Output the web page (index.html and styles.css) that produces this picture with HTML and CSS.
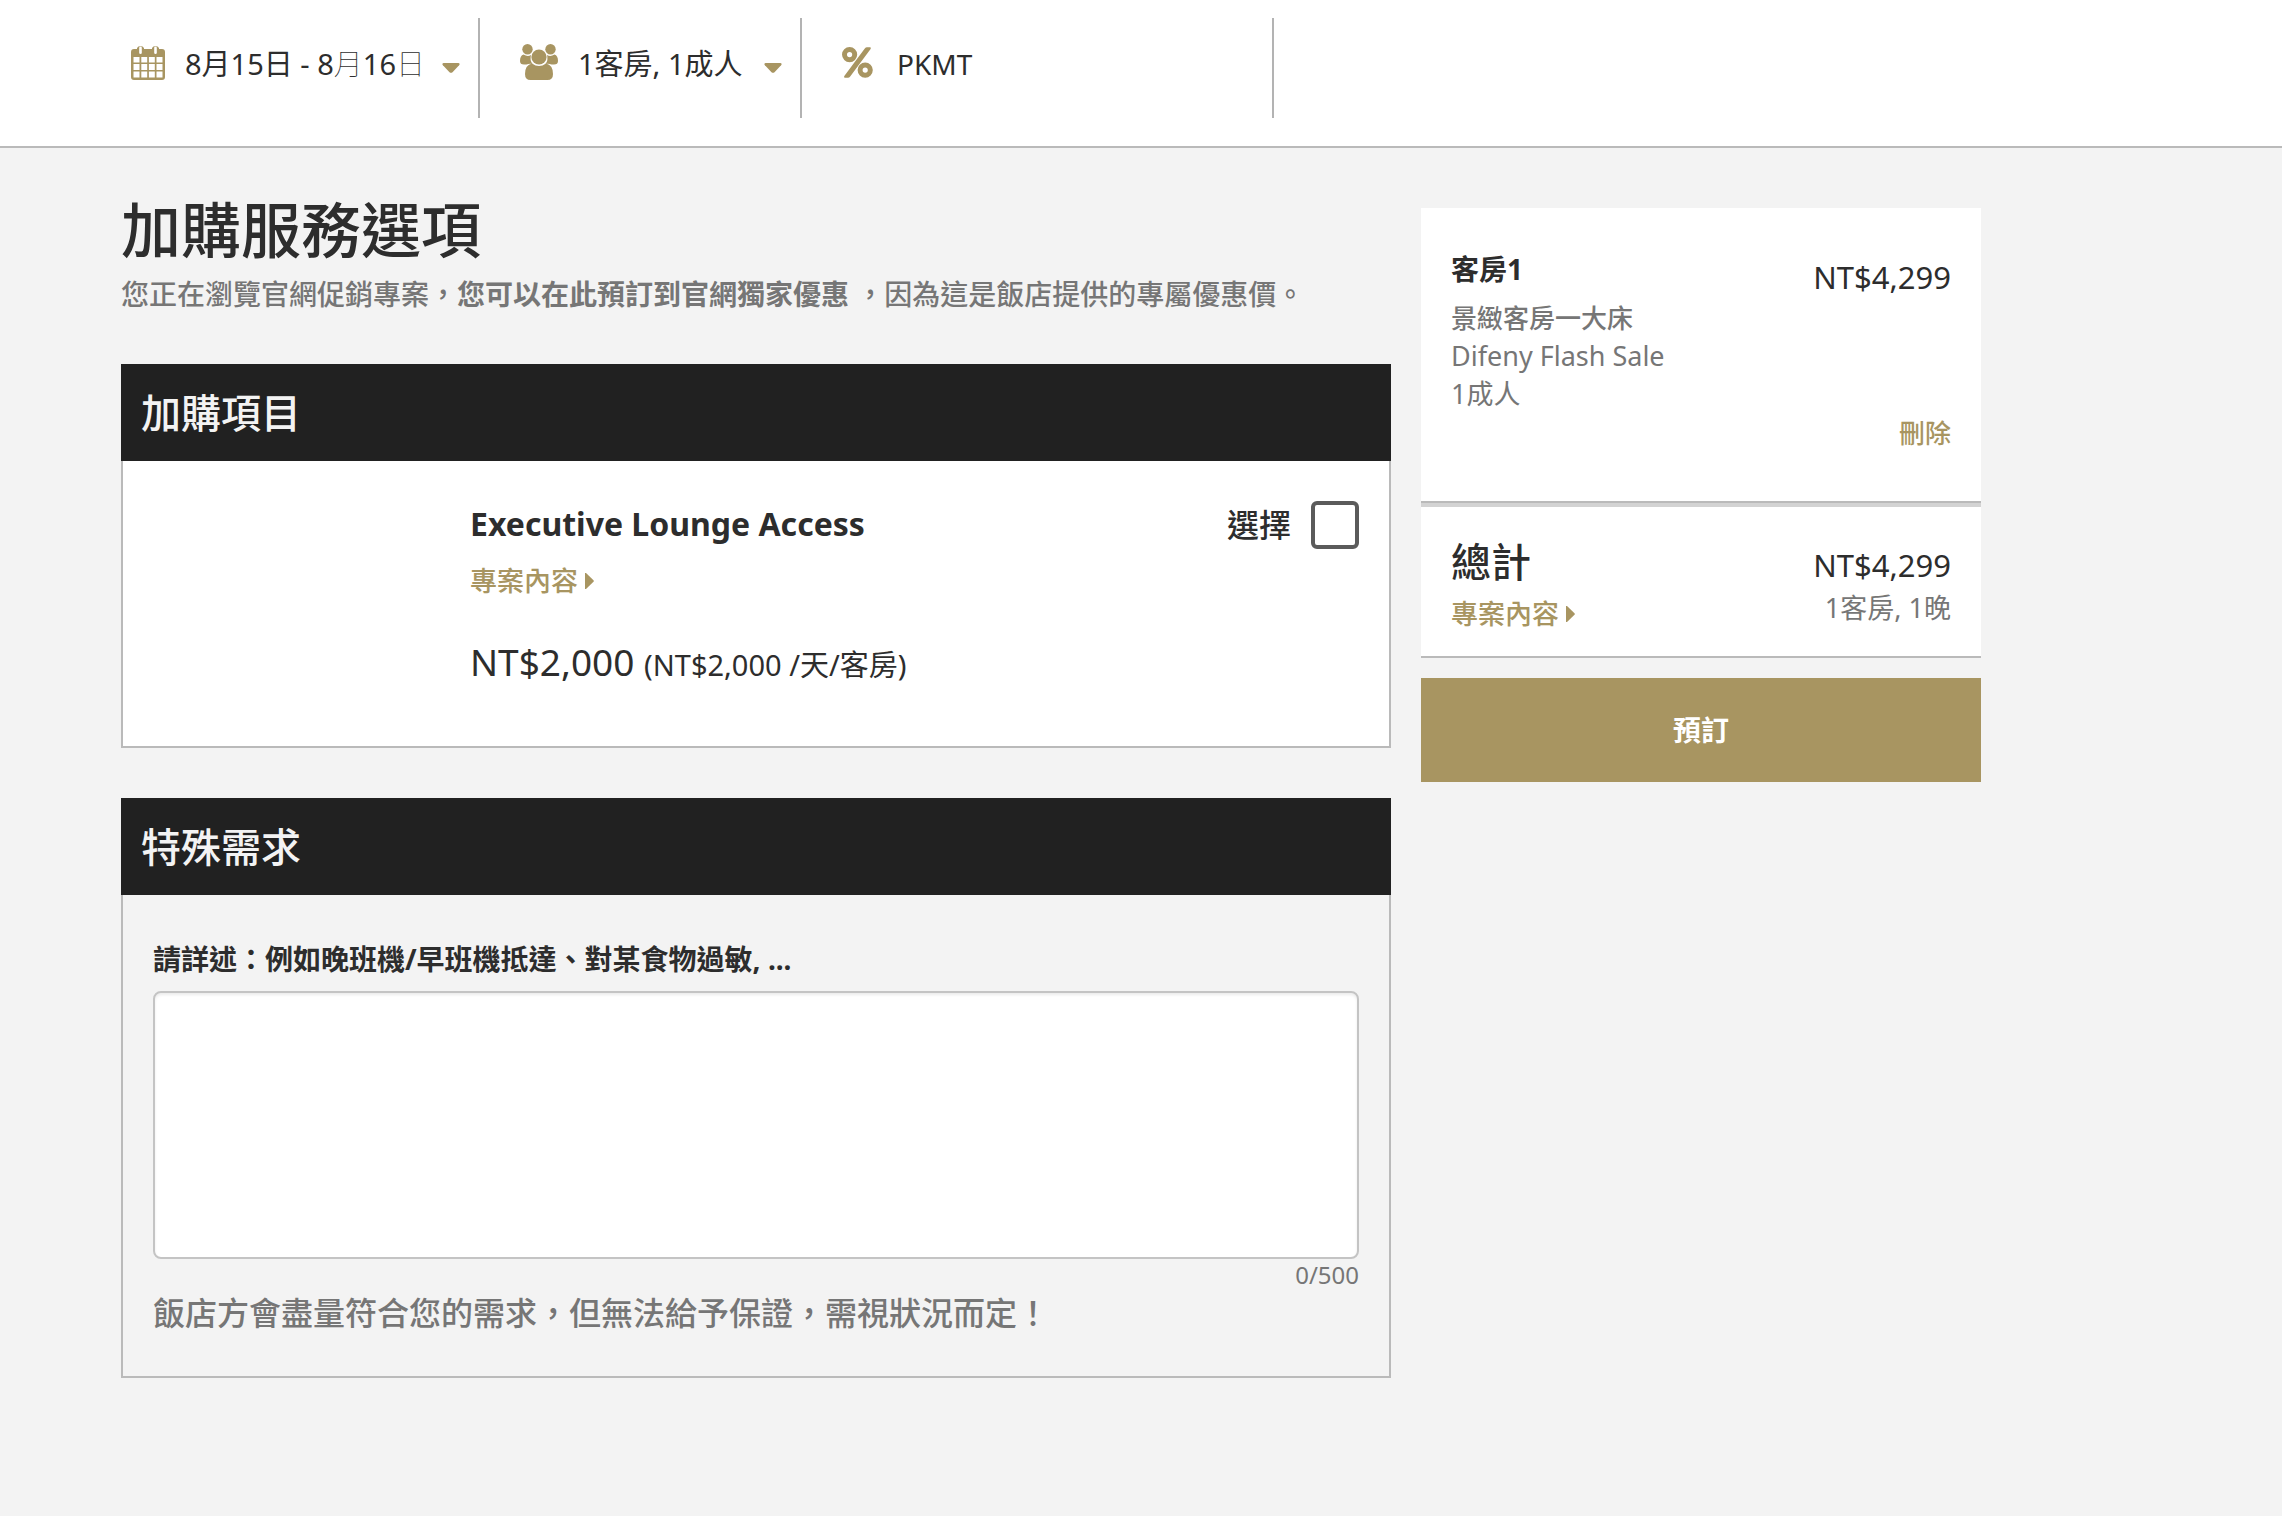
FILE: index.html
```html
<!DOCTYPE html>
<html lang="zh-TW">
<head>
  <meta charset="UTF-8" />
  <meta name="viewport" content="width=device-width, initial-scale=1.0"/>
  <title>加購服務選項</title>
  <link rel="stylesheet" href="styles.css">
</head>
<body>

  <!-- Search bar -->
  <header class="topbar">
    <div class="filters">
      <button type="button" class="filter filter-dates">
        <svg class="icon" width="34" height="36" viewBox="0 0 34 36">
          <path fill-rule="evenodd" d="M3 5h3V4a4 4 0 0 1 7 0v1h8V4a4 4 0 0 1 7 0v1h3a3 3 0 0 1 3 3v25a3 3 0 0 1-3 3H3a3 3 0 0 1-3-3V8a3 3 0 0 1 3-3zM2.500 13v5.500h6V13zM10.300 13v5.500h5.900V13zM17.900 13v5.500h5.900V13zM25.500 13v5.500h6V13zM2.500 20v6h6v-6zM10.300 20v6h5.900v-6zM17.900 20v6h5.900v-6zM25.500 20v6h6v-6zM2.500 27.500v6h6v-6zM10.300 27.500v6h5.900v-6zM17.900 27.500v6h5.900v-6zM25.500 27.500v6h6v-6zM9.500 2.500a1.300 1.300 0 0 0-1.300 1.300v5a1.300 1.300 0 0 0 2.600 0v-5a1.300 1.300 0 0 0-1.300-1.300zM24.500 2.500a1.300 1.300 0 0 0-1.300 1.300v5a1.300 1.300 0 0 0 2.600 0v-5a1.300 1.300 0 0 0-1.300-1.300z"/>
        </svg>
        <span class="filter-text">8月15日 - 8<span class="thin">月</span>16<span class="thin">日</span></span>
        <svg class="caret" width="18" height="10" viewBox="0 0 18 10"><path d="M1.500 0h15q2 .6.6 2.300L10.500 9.200Q9 10.500 7.500 9.200L.9 2.300Q-.5.6 1.500 0z"/></svg>
      </button>
      <button type="button" class="filter filter-guests">
        <svg class="icon" width="38" height="36" viewBox="0 0 38 36">
          <ellipse cx="7.500" cy="5.200" rx="5.200" ry="5.200"/>
          <ellipse cx="30.500" cy="5.200" rx="5.200" ry="5.200"/>
          <path d="M3.500 10.500q4 2.500 7.500.5-1.500 5 1.500 9Q9 19.500 6.500 20.500H4Q0 20.500 0 17q0-5.500 3.500-6.500z"/>
          <path d="M34.500 10.500q-4 2.500-7.500.5 1.500 5-1.500 9 3.500-.5 6 .5H34q4 0 4-3.500 0-5.500-3.500-6.500z"/>
          <circle cx="19" cy="13" r="7.600"/>
          <path d="M12 19.500q7 5 14 0 7 1.500 7 10.500 0 6-5.500 6h-17Q5 36 5 30q0-9 7-10.500z"/>
        </svg>
        <span class="filter-text">1客房, 1成人</span>
        <svg class="caret" width="18" height="10" viewBox="0 0 18 10"><path d="M1.500 0h15q2 .6.6 2.300L10.500 9.200Q9 10.500 7.500 9.200L.9 2.300Q-.5.6 1.500 0z"/></svg>
      </button>
      <label class="filter filter-promo">
        <svg class="icon" width="31" height="31" viewBox="0 0 31 31">
          <path fill-rule="evenodd" d="M7.600 0a7.600 7.600 0 1 1 0 15.200 7.600 7.600 0 0 1 0-15.200zm0 5a2.600 2.600 0 1 0 0 5.200 2.600 2.600 0 0 0 0-5.200zM23.200 15.500a7.600 7.600 0 1 1 0 15.200 7.600 7.600 0 0 1 0-15.200zm0 5a2.600 2.600 0 1 0 0 5.200 2.600 2.600 0 0 0 0-5.200z"/>
          <path d="M25 .3h3q1.500.3.600 1.800L8 29.700q-.8 1.100-2 1.100H3q-1.700-.3-.7-1.800L22.800 1.400Q23.700.3 25 .3z"/>
        </svg>
        <input type="text" name="promo" value="PKMT" aria-label="促銷代碼">
      </label>
    </div>
  </header>

  <main class="page">
    <div class="content">
      <h1>加購服務選項</h1>
      <p class="intro">您正在瀏覽官網促銷專案，<strong>您可以在此預訂到官網獨家優惠</strong> ，因為這是飯店提供的專屬優惠價。</p>

      <section class="panel">
        <h2>加購項目</h2>
        <div class="panel-body extra">
          <div class="extra-info">
            <h3>Executive Lounge Access</h3>
            <a href="#" class="more">專案內容<svg class="arrow" width="9" height="16" viewBox="0 0 9 16"><path d="M0 0h1l7.500 7.200q.6.800 0 1.600L1 16H0z"/></svg></a>
            <p class="price">NT$2,000 <small>(NT$2,000 /天/客房)</small></p>
          </div>
          <label class="select" for="lounge">選擇 <input type="checkbox" id="lounge" name="lounge"></label>
        </div>
      </section>

      <section class="panel">
        <h2>特殊需求</h2>
        <div class="panel-body requests">
          <label for="notes">請詳述：例如晚班機/早班機抵達、對某食物過敏, ...</label>
          <textarea id="notes" name="notes" maxlength="500"></textarea>
          <div class="count">0/500</div>
          <p class="note">飯店方會盡量符合您的需求，但無法給予保證，需視狀況而定！</p>
        </div>
      </section>
    </div>

    <aside class="summary">
      <div class="card room">
        <div>
          <h3>客房1</h3>
          <p class="room-name">景緻客房一大床</p>
          <p>Difeny Flash Sale</p>
          <p>1成人</p>
        </div>
        <div class="side">
          <span class="amount">NT$4,299</span>
          <a href="#" class="remove">刪除</a>
        </div>
      </div>
      <div class="card total">
        <div>
          <h2>總計</h2>
          <a href="#" class="more">專案內容<svg class="arrow" width="9" height="16" viewBox="0 0 9 16"><path d="M0 0h1l7.500 7.200q.6.800 0 1.600L1 16H0z"/></svg></a>
        </div>
        <div class="side">
          <span class="amount">NT$4,299</span>
          <p>1客房, 1晚</p>
        </div>
      </div>
      <button type="submit" class="book">預訂</button>
    </aside>
  </main>

</body>
</html>
```
FILE: styles.css
```css
* {
  box-sizing: border-box;
}

body {
  margin: 0;
  background: #f3f3f3;
  color: #2d2d2d;
  font-family: "Noto Sans", "Noto Sans CJK TC", sans-serif;
  font-size: 28px;
  line-height: 40px;
}

h1, h2, h3, p {
  margin: 0;
  font-weight: normal;
}

h1, h2, .intro, .note, .select, .more, .remove, .room-name {
  font-weight: 500;
}

button, input, textarea {
  font: inherit;
  color: inherit;
}

a {
  color: #a89561;
  font-size: 27px;
  text-decoration: none;
}

svg {
  fill: #a89561;
  flex: none;
}

/* Search bar */
.topbar {
  padding: 18px 0 28px 121px;
  background: #fff;
  border-bottom: 2px solid #bababa;
}

.filters {
  display: flex;
}

.filter {
  display: flex;
  align-items: center;
  height: 100px;
  padding: 0 18px 8px 40px;
  background: none;
  border: 0;
  border-right: 2px solid #b3b3b3;
  text-align: left;
  white-space: nowrap;
  cursor: pointer;
}

.filter-dates {
  width: 359px;
  padding-left: 10px;
}

.filter-guests {
  width: 322px;
}

.filter-promo {
  width: 472px;
}

.filter-text {
  flex: 1;
  margin-left: 20px;
  font-size: 29px;
}

.filter .icon {
  margin-bottom: 4px;
}

.filter .caret {
  margin-top: 8px;
}

.filter input {
  width: 100%;
  min-width: 0;
  margin-left: 24px;
  padding: 0;
  border: 0;
  background: none;
}

.thin {
  font-weight: 100;
}

/* Page columns */
.page {
  display: grid;
  grid-template-columns: minmax(0, 1270fr) minmax(0, 560fr);
  gap: 30px;
  align-items: start;
  max-width: 1860px;
  margin: 52px 30px 60px 121px;
}

h1 {
  margin-bottom: 14px;
  font-size: 60px;
  line-height: 60px;
}

.intro {
  margin-bottom: 50px;
  color: #767676;
}

.panel {
  margin-bottom: 50px;
}

.panel h2 {
  padding: 20px;
  background: #212121;
  color: #f3f3f3;
  font-size: 40px;
  line-height: 57px;
}

.panel-body {
  border: 2px solid #bababa;
  border-top: 0;
}

/* Extras */
.extra {
  display: flex;
  justify-content: space-between;
  align-items: flex-start;
  padding: 40px 30px 56px 347px;
  background: #fff;
}

.extra h3 {
  margin-bottom: 13px;
  font-size: 32px;
  font-weight: bold;
  line-height: 46px;
}

.more {
  display: inline-flex;
  align-items: center;
  gap: 7px;
}

.price {
  margin-top: 36px;
  font-size: 37px;
  line-height: 50px;
}

.price small {
  font-size: 29px;
}

.select {
  display: flex;
  align-items: center;
  gap: 20px;
  font-size: 32px;
}

.select input {
  appearance: none;
  width: 48px;
  height: 48px;
  margin: 0;
  border: 4px solid #5b5b5b;
  border-radius: 6px;
  background: #fff;
}

.select input:checked {
  background: #a89561;
}

/* Special requests */
.requests {
  padding: 44px 30px 42px;
}

.requests label {
  display: block;
  margin-bottom: 12px;
  font-weight: bold;
}

.requests textarea {
  display: block;
  width: 100%;
  height: 268px;
  padding: 12px;
  border: 2px solid #c4c4c4;
  border-radius: 8px;
  background: #fff;
  box-shadow: inset 0 2px 3px rgba(0, 0, 0, 0.08);
  resize: none;
}

.count {
  color: #767676;
  font-size: 24px;
  line-height: 32px;
  text-align: right;
}

.note {
  color: #767676;
  font-size: 32px;
  line-height: 43px;
}

/* Booking summary */
.summary {
  margin-top: 8px;
}

.card {
  display: flex;
  justify-content: space-between;
  padding: 41px 30px 48px;
  background: #fff;
  border-bottom: 2px solid #bababa;
}

.card p {
  color: #767676;
  font-size: 27px;
  line-height: 38px;
}

.card .room-name,
.remove {
  font-size: 26px;
}

.card h3 {
  margin-bottom: 10px;
  font-size: 28px;
  font-weight: bold;
}

.card h2 {
  font-size: 40px;
  line-height: 50px;
  margin-bottom: 6px;
}

.side {
  display: flex;
  flex-direction: column;
  justify-content: space-between;
  padding-top: 8px;
  text-align: right;
}

.amount {
  font-size: 31px;
}

.room .side {
  height: 204px;
}

.total {
  padding: 30px 30px 22px;
  border-top: 4px solid #d3d3d3;
}

.total .side {
  justify-content: flex-start;
  gap: 4px;
}

.book {
  display: block;
  width: 100%;
  margin-top: 20px;
  padding: 32px;
  border: 0;
  background: #a89561;
  color: #fff;
  font-weight: bold;
  cursor: pointer;
}
```
